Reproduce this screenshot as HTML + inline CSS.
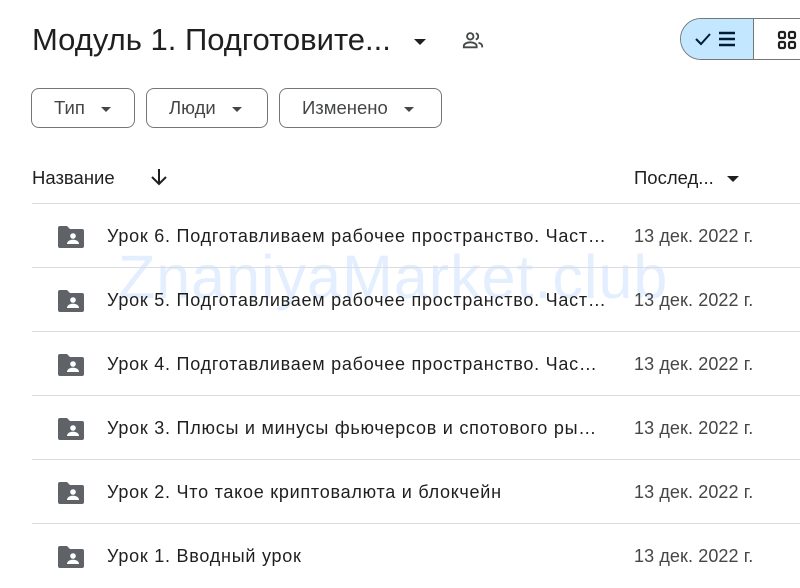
<!DOCTYPE html>
<html><head><meta charset="utf-8"><style>
body{margin:0;width:800px;height:558px;overflow:hidden;background:#fff;font-family:"Liberation Sans",sans-serif;color:#1f1f1f;position:relative}
.abs{position:absolute}
.title{left:32px;top:22px;font-size:31px;letter-spacing:0px;white-space:nowrap}
.btn{top:88px;height:40px;border:1px solid #747775;border-radius:8px;box-sizing:border-box;font-size:18.5px;line-height:38px;padding-left:22px;color:#444746}
.tri{display:inline-block;width:0;height:0;border-left:5px solid transparent;border-right:5px solid transparent;border-top:5px solid #444746;vertical-align:middle;margin-left:12px}
.row{left:32px;width:768px;height:64px;border-top:1px solid #dadce0}
.name{position:absolute;left:75px;top:0;line-height:64px;font-size:18px;letter-spacing:0.75px;white-space:nowrap;width:500px;overflow:hidden;text-overflow:ellipsis}
.date{position:absolute;left:602px;top:0;line-height:64px;font-size:18px;letter-spacing:0.1px;color:#444746;white-space:nowrap}
.fold{position:absolute;left:24px;top:21px}
</style></head><body>
<div class="abs title">Модуль 1. Подготовите... <span class="tri" style="border-left-width:6px;border-right-width:6px;border-top-width:6px;margin-left:14px;border-top-color:#1f1f1f"></span></div>
<svg class="abs" style="left:462px;top:29px" width="22" height="22" viewBox="0 0 24 24" fill="none" stroke="#444746" stroke-width="2"><circle cx="9" cy="8" r="3.5"/><path d="M2 20v-1.5c0-2.5 3.5-4 7-4s7 1.5 7 4V20z"/><path d="M15 4.6a3.5 3.5 0 0 1 0 6.8M18 15c2 .6 4 1.8 4 3.5V20"/></svg>
<div class="abs" style="left:680px;top:18px;width:140px;height:42px;border:1px solid #747775;border-radius:21px;box-sizing:border-box;overflow:hidden">
<div style="position:absolute;left:0;top:0;width:72px;height:40px;background:#c2e7ff;border-right:1px solid #747775"></div>
<svg style="position:absolute;left:14px;top:11px" width="46" height="18" viewBox="0 0 46 18"><path d="M1 9l5 5 9-10" stroke="#001d35" stroke-width="2" fill="none"/><path d="M24 3h16M24 9h16M24 15h16" stroke="#001d35" stroke-width="2.4"/></svg>
<svg style="position:absolute;left:96px;top:11px" width="20" height="20" viewBox="0 0 20 20" fill="none" stroke="#1f1f1f" stroke-width="2.2"><rect x="2" y="2" width="6" height="6" rx="1.5"/><rect x="12" y="2" width="6" height="6" rx="1.5"/><rect x="2" y="12" width="6" height="6" rx="1.5"/><rect x="12" y="12" width="6" height="6" rx="1.5"/></svg>
</div>
<div class="abs btn" style="left:31px;width:104px">Тип<span class="tri" style="margin-left:16px"></span></div>
<div class="abs btn" style="left:146px;width:122px">Люди<span class="tri" style="margin-left:16px"></span></div>
<div class="abs btn" style="left:279px;width:163px">Изменено<span class="tri" style="margin-left:16px"></span></div>
<div class="abs" style="left:32px;top:167px;font-size:18.5px">Название</div>
<svg class="abs" style="left:150px;top:167px" width="18" height="20" viewBox="0 0 18 20"><path d="M9 2v15M2 10l7 7 7-7" stroke="#1f1f1f" stroke-width="2" fill="none"/></svg>
<div class="abs" style="left:634px;top:167px;font-size:18.5px">Послед... <span class="tri" style="border-left-width:6px;border-right-width:6px;border-top-width:6px;margin-left:8px;border-top-color:#1f1f1f"></span></div>
<div class="abs" style="left:118px;top:242px;font-size:61px;color:#e3eeff;letter-spacing:1px;white-space:nowrap">ZnaniyaMarket.club</div>
<div id="rows"></div>
<script>
var t=["Урок 6. Подготавливаем рабочее пространство. Часть 3","Урок 5. Подготавливаем рабочее пространство. Часть 2","Урок 4. Подготавливаем рабочее пространство. Часть 1","Урок 3. Плюсы и минусы фьючерсов и спотового рынка","Урок 2. Что такое криптовалюта и блокчейн","Урок 1. Вводный урок"];
var w=[502,502,492,499,500,500];
var h="";
t.forEach(function(s,i){h+='<div class="abs row" style="top:'+(203+i*64)+'px"><svg class="fold" width="30" height="24" viewBox="0 0 30 24"><path d="M2 3a2 2 0 0 1 2-2h7l3 3h12a2 2 0 0 1 2 2v15a2 2 0 0 1-2 2H4a2 2 0 0 1-2-2z" fill="#5f6368"/><circle cx="17" cy="11" r="2.8" fill="#fff"/><path d="M11 19c0-3 3-4.3 6-4.3s6 1.3 6 4.3z" fill="#fff"/></svg><div class="name" style="width:'+w[i]+'px">'+s+'</div><div class="date">13 дек. 2022 г.</div></div>';});
document.getElementById("rows").innerHTML=h;
</script>
</body></html>
